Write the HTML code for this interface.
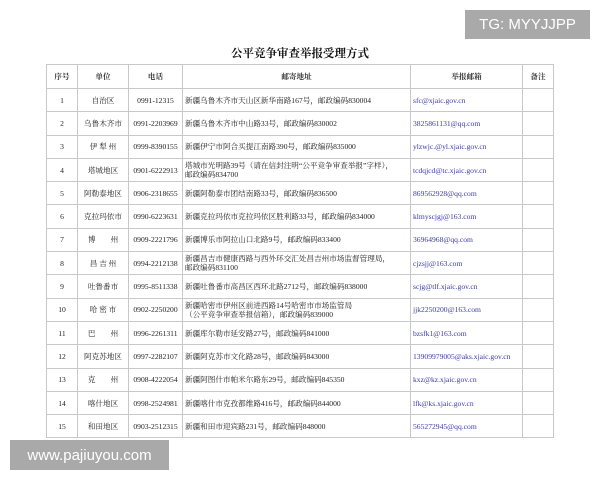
<!DOCTYPE html>
<html><head><meta charset="utf-8">
<style>
html,body{margin:0;padding:0;width:600px;height:480px;background:#fff;overflow:hidden;}
body{font-family:"Liberation Serif","Noto Serif CJK SC","Noto Sans CJK SC",serif;color:#222;position:relative;}
.title{position:absolute;top:45px;left:0;width:600px;text-align:center;font-size:11.5px;font-weight:bold;color:#111;}
table{position:absolute;left:46px;top:64px;width:507px;border-collapse:collapse;table-layout:fixed;font-size:7.6px;}
td,th{border:1px solid #c8c8c8;height:22.3px;padding:0 2px;line-height:9px;overflow:hidden;white-space:nowrap;}
th{height:23px;font-weight:bold;font-size:7.6px;color:#333;text-align:center;}
td.c{text-align:center;}
td.e{color:#3a3aa8;}
.wm{position:absolute;background:#a9a9a9;color:#fff;font-family:"Liberation Sans",sans-serif;display:flex;align-items:center;justify-content:center;}
</style></head><body>
<div class="title">公平竞争审查举报受理方式</div>
<table>
<colgroup><col style="width:31px"><col style="width:51px"><col style="width:54px"><col style="width:228px"><col style="width:112px"><col style="width:31px"></colgroup>
<tr><th>序号</th><th>单位</th><th>电话</th><th>邮寄地址</th><th>举报邮箱</th><th>备注</th></tr>
<tr><td class="c">1</td><td class="c">自治区</td><td class="c">0991-12315</td><td>新疆乌鲁木齐市天山区新华南路167号，邮政编码830004</td><td class="e">sfc@xjaic.gov.cn</td><td></td></tr>
<tr><td class="c">2</td><td class="c">乌鲁木齐市</td><td class="c">0991-2203969</td><td>新疆乌鲁木齐市中山路33号，邮政编码830002</td><td class="e">3825861131@qq.com</td><td></td></tr>
<tr><td class="c">3</td><td class="c">伊 犁 州</td><td class="c">0999-8390155</td><td>新疆伊宁市阿合买提江南路390号，邮政编码835000</td><td class="e">ylzwjc.@yl.xjaic.gov.cn</td><td></td></tr>
<tr><td class="c">4</td><td class="c">塔城地区</td><td class="c">0901-6222913</td><td>塔城市光明路39号（请在信封注明“公平竞争审查举报”字样），<br>邮政编码834700</td><td class="e">tcdqjcd@tc.xjaic.gov.cn</td><td></td></tr>
<tr><td class="c">5</td><td class="c">阿勒泰地区</td><td class="c">0906-2318655</td><td>新疆阿勒泰市团结南路33号，邮政编码836500</td><td class="e">869562928@qq.com</td><td></td></tr>
<tr><td class="c">6</td><td class="c">克拉玛依市</td><td class="c">0990-6223631</td><td>新疆克拉玛依市克拉玛依区胜利路33号，邮政编码834000</td><td class="e">klmyscjgj@163.com</td><td></td></tr>
<tr><td class="c">7</td><td class="c">博　　州</td><td class="c">0909-2221796</td><td>新疆博乐市阿拉山口北路9号，邮政编码833400</td><td class="e">36964968@qq.com</td><td></td></tr>
<tr><td class="c">8</td><td class="c">昌 吉 州</td><td class="c">0994-2212138</td><td>新疆昌吉市健康西路与西外环交汇处昌吉州市场监督管理局，<br>邮政编码831100</td><td class="e">cjzsjj@163.com</td><td></td></tr>
<tr><td class="c">9</td><td class="c">吐鲁番市</td><td class="c">0995-8511338</td><td>新疆吐鲁番市高昌区西环北路2712号，邮政编码838000</td><td class="e">scjg@tlf.xjaic.gov.cn</td><td></td></tr>
<tr><td class="c">10</td><td class="c">哈 密 市</td><td class="c">0902-2250200</td><td>新疆哈密市伊州区前进西路14号哈密市市场监管局<br>（公平竞争审查举报信箱），邮政编码839000</td><td class="e">jjk2250200@163.com</td><td></td></tr>
<tr><td class="c">11</td><td class="c">巴　　州</td><td class="c">0996-2261311</td><td>新疆库尔勒市延安路27号，邮政编码841000</td><td class="e">bzsfk1@163.com</td><td></td></tr>
<tr><td class="c">12</td><td class="c">阿克苏地区</td><td class="c">0997-2282107</td><td>新疆阿克苏市文化路28号，邮政编码843000</td><td class="e">13909979005@aks.xjaic.gov.cn</td><td></td></tr>
<tr><td class="c">13</td><td class="c">克　　州</td><td class="c">0908-4222054</td><td>新疆阿图什市帕米尔路东29号，邮政编码845350</td><td class="e">kxz@kz.xjaic.gov.cn</td><td></td></tr>
<tr><td class="c">14</td><td class="c">喀什地区</td><td class="c">0998-2524981</td><td>新疆喀什市克孜都维路416号，邮政编码844000</td><td class="e">lfk@ks.xjaic.gov.cn</td><td></td></tr>
<tr><td class="c">15</td><td class="c">和田地区</td><td class="c">0903-2512315</td><td>新疆和田市迎宾路231号，邮政编码848000</td><td class="e">565272945@qq.com</td><td></td></tr>
</table>
<div class="wm" style="left:465px;top:10px;width:125px;height:29px;font-size:15px;">TG: MYYJJPP</div>
<div class="wm" style="left:10px;top:440px;width:159px;height:30px;font-size:15px;">www.pajiuyou.com</div>
</body></html>
